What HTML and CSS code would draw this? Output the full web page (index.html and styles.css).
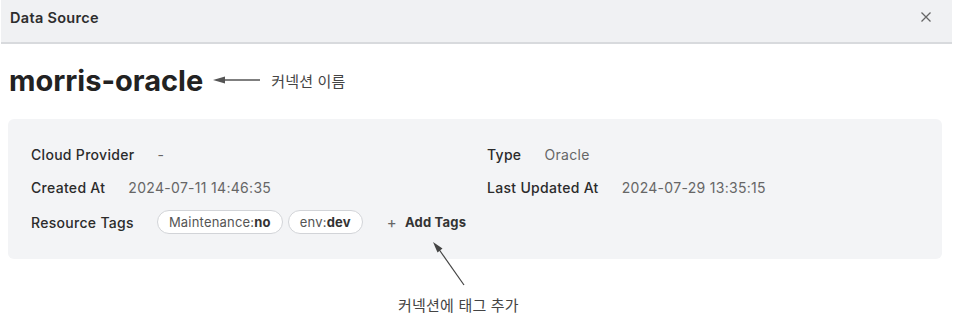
FILE: index.html
```html
<!DOCTYPE html>
<html lang="ko">
<head>
<meta charset="utf-8">
<link rel="stylesheet" href="styles.css">
</head>
<body>
<div class="page">
  <div class="header">
    <span class="header-title">Data Source</span>
    <svg class="close" width="12" height="12" viewBox="0 0 12 12"><path d="M1.5 1.5 L10.5 10.5 M10.5 1.5 L1.5 10.5" stroke="#666" stroke-width="1.3" fill="none"/></svg>
  </div>
  <div class="title-row">
    <h1 class="title">morris-oracle</h1>
    <svg class="title-arrow" width="48" height="10" viewBox="0 0 48 10"><path d="M0 5 L12 1.5 L12 8.5 Z" fill="#555"/><path d="M10 5 H47" stroke="#555" stroke-width="1.3"/></svg>
    <span class="note">커넥션 이름</span>
  </div>
  <div class="card">
    <div class="grid">
      <div class="field"><span class="label">Cloud Provider</span><span class="value">-</span></div>
      <div class="field"><span class="label">Type</span><span class="value">Oracle</span></div>
      <div class="field"><span class="label">Created At</span><span class="value">2024-07-11 14:46:35</span></div>
      <div class="field"><span class="label">Last Updated At</span><span class="value">2024-07-29 13:35:15</span></div>
      <div class="field full">
        <span class="label">Resource Tags</span>
        <div class="tags">
          <span class="tag">Maintenance:<b>no</b></span>
          <span class="tag">env:<b>dev</b></span>
          <span class="add"><span class="plus">+</span>Add Tags</span>
        </div>
      </div>
    </div>
  </div>
  <div class="bottom-note">
    <svg class="tag-arrow" width="40" height="50" viewBox="0 0 40 50"><path d="M4 3 L13.5 9.5 L8.5 13.5 Z" fill="#444"/><path d="M9 9 L35 46" stroke="#444" stroke-width="1.2"/></svg>
    <span class="note">커넥션에 태그 추가</span>
  </div>
</div>
</body>
</html>
```
FILE: styles.css
```css
* { box-sizing: border-box; }
body {
  margin: 0;
  background: #ffffff;
  font-family: Inter, "Noto Sans CJK KR", sans-serif;
  color: #2a2a2a;
}
.page { position: relative; width: 959px; height: 325px; }
.header {
  margin: 0 7px 0 1px;
  height: 44px;
  background: #f0f1f3;
  border-bottom: 2px solid #d8dadd;
  display: flex;
  align-items: center;
  justify-content: space-between;
  padding: 0 20px 8px 9px;
}
.header-title { font-size: 14.5px; font-weight: 600; color: #2d2d2d; letter-spacing: 0.3px; }
.close { display: block; }
.title-row {
  display: flex;
  align-items: center;
  height: 72px;
  padding: 0 9px;
}
.title {
  margin: 0;
  font-size: 29px;
  font-weight: 700;
  color: #222;
}
.title-arrow { margin-left: 10px; }
.note {
  font-family: "Noto Sans CJK KR", sans-serif;
  font-size: 15px;
  letter-spacing: 0.2px;
  color: #444;
}
.title-row .note { margin-left: 10px; }
.card {
  margin: 3px 17px 0 8px;
  background: #f3f4f6;
  border-radius: 6px;
  padding: 25px 23px 25px 23px;
}
.grid {
  display: grid;
  grid-template-columns: 1fr 1fr;
  column-gap: 24px;
  row-gap: 13px;
}
.field {
  display: flex;
  align-items: center;
  gap: 23px;
  height: 20px;
  font-size: 14px;
  letter-spacing: 0.3px;
}
.field.full { grid-column: 1 / -1; height: 24px; }
.label { font-weight: 500; color: #2b2b2b; }
.value { color: #666; }
.tags { display: flex; align-items: center; gap: 5px; }
.tag {
  height: 24px;
  display: inline-flex;
  align-items: center;
  padding: 0 11px;
  background: #fff;
  border: 1px solid #d2d4d8;
  border-radius: 12px;
  font-size: 13px;
  letter-spacing: 0.2px;
  color: #555;
}
.tag b { font-weight: 700; color: #333; }
.add {
  margin-left: 19px;
  font-size: 13px;
  letter-spacing: 0.2px;
  font-weight: 700;
  color: #333;
  display: inline-flex;
  align-items: center;
}
.plus { font-weight: 400; color: #666; margin-right: 8px; font-size: 15px; }
.bottom-note { padding: 35px 0 0 398px; }
.tag-arrow { position: absolute; left: 429px; top: 239px; }
```
